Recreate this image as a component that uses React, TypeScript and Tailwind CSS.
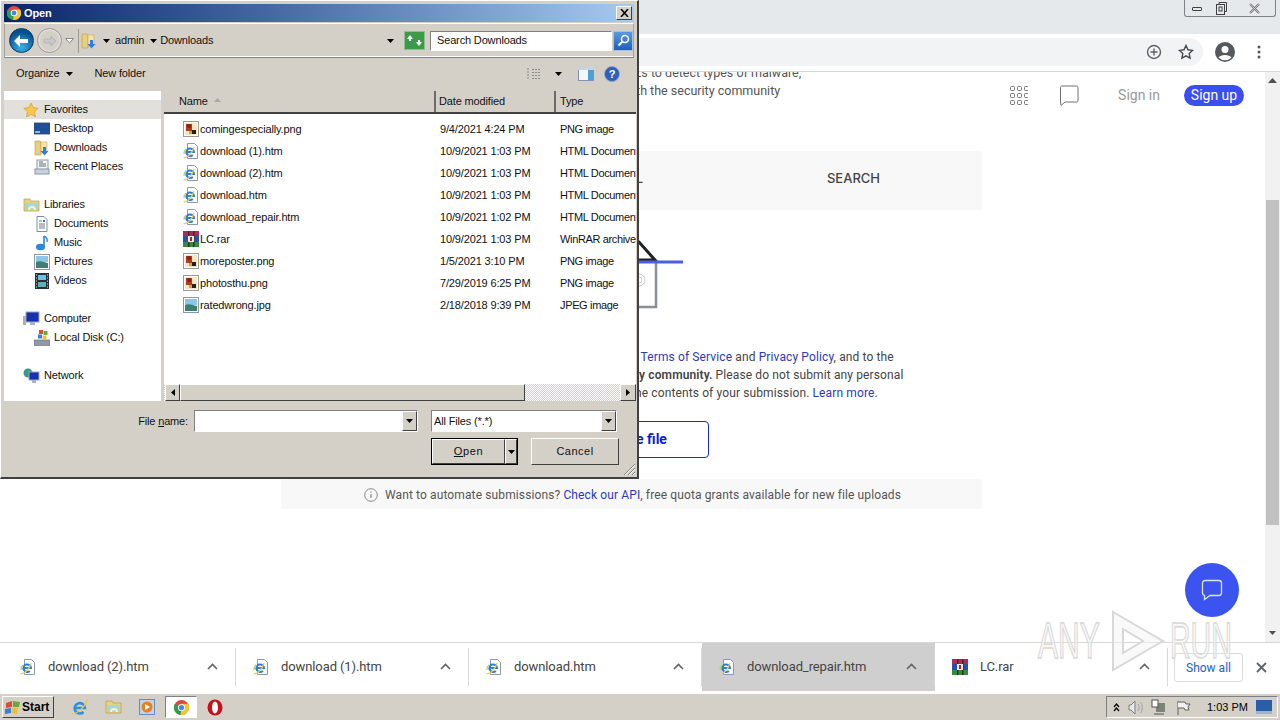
import React from "react";

const sunken = "border border-t-[#808080] border-l-[#808080] border-r-white border-b-white";
const raised = "border border-t-white border-l-white border-r-[#404040] border-b-[#404040] bg-[#d4d0c8]";

function Chrome({ s = 16 }: { s?: number }) {
  return (
    <svg width={s} height={s} viewBox="0 0 16 16">
      <circle cx="8" cy="8" r="8" fill="#e0463a" />
      <path d="M8 8 L1 4 A8 8 0 0 0 7 16 Z" fill="#2f9e4f" />
      <path d="M8 8 L7 16 A8 8 0 0 0 15 4 L8 4 Z" fill="#f6c42d" />
      <circle cx="8" cy="8" r="3.800" fill="#fff" />
      <circle cx="8" cy="8" r="2.800" fill="#4a86e8" />
    </svg>
  );
}
function Caret({ c = "#000", w = 7 }: { c?: string; w?: number }) {
  return (
    <svg width={w} height={4} viewBox="0 0 7 4">
      <path d="M0 0h7L3.500 4z" fill={c} />
    </svg>
  );
}
function IEDoc({ s = 16 }: { s?: number }) {
  return (
    <svg width={s} height={s} viewBox="0 0 16 16">
      <path d="M4.500 .5h7l3 3v12h-10z" fill="#fff" stroke="#8d99a8" />
      <path d="M3.500 9h7.500a3.800 3.800 0 1 0-1.200 3" fill="none" stroke="#2a7fd0" strokeWidth="2" />
      <path d="M.5 14.500c3 1 9-4 10.500-10.500" fill="none" stroke="#e8d050" strokeWidth="1.200" />
      <path d="M1 11c0-2 .5-4 2-5" fill="none" stroke="#b8d060" strokeWidth="1.200" />
    </svg>
  );
}
function IEGlobe() {
  return (
    <svg width="18" height="18" viewBox="0 0 18 18">
      <path d="M3 10h11a5.200 5.200 0 1 0-1.500 4" fill="none" stroke="#2f8fe0" strokeWidth="2.600" />
      <path d="M.5 15.500C4 17.500 14 10 16.500 1" fill="none" stroke="#e8c84a" strokeWidth="1.300" />
    </svg>
  );
}
function PngIcon() {
  return (
    <svg width="16" height="16" viewBox="0 0 16 16">
      <rect x=".5" y=".5" width="15" height="15" fill="#fff" stroke="#9a9a9a" />
      <rect x="2" y="2" width="12" height="12" fill="#f3e6c2" />
      <rect x="3" y="3" width="6" height="7" fill="#b33a1c" />
      <circle cx="6" cy="5" r="2" fill="#8a1f10" />
      <rect x="9" y="9" width="4" height="4" fill="#202020" />
      <rect x="6" y="10" width="3" height="3" fill="#e0a030" />
    </svg>
  );
}
function JpgIcon() {
  return (
    <svg width="16" height="16" viewBox="0 0 16 16">
      <rect x=".5" y=".5" width="15" height="15" fill="#fff" stroke="#8c98a4" />
      <rect x="2" y="2" width="12" height="6" fill="#8ec6e8" />
      <path d="M2 8c4-2 8 0 12 1v5H2z" fill="#3f7f70" />
    </svg>
  );
}
function RarIcon({ s = 16 }: { s?: number }) {
  return (
    <svg width={s} height={s} viewBox="0 0 16 16">
      <rect width="16" height="5" fill="#b0285c" />
      <rect y="5" width="16" height="6" fill="#2d4fa8" />
      <rect y="11" width="16" height="5" fill="#2f8f3f" />
      <rect x="5" width="1.500" height="16" fill="#402a20" />
      <rect x="10" width="1.500" height="16" fill="#402a20" />
      <rect x="5" y="5" width="6" height="6" fill="#f2ece0" />
      <rect x="7" y="6" width="2" height="4" fill="#b02020" />
    </svg>
  );
}
function Folder({ arrow = false }: { arrow?: boolean }) {
  return (
    <svg width={16} height={16} viewBox="0 0 16 16">
      <path d="M1 1h5l1 1v13H1z" fill="#e8cf7e" stroke="#b89a4a" strokeWidth=".6" />
      <path d="M7 2h6v10H7z" fill="#f4e4a8" stroke="#c6aa5c" strokeWidth=".6" />
      {arrow && <path d="M9 7h3v4h2.500l-4 4.500-4-4.500H9z" fill="#2f7fd6" />}
    </svg>
  );
}
function NavIcon({ k }: { k: string }) {
  switch (k) {
    case "star":
      return (
        <svg width="16" height="16" viewBox="0 0 16 16">
          <path d="M8 1l2.200 4.600 5 .7-3.600 3.500.9 5L8 12.400 3.500 14.800l.9-5L.8 6.300l5-.7z" fill="#f7c948" stroke="#d89a3a" strokeWidth=".7" />
        </svg>
      );
    case "desktop":
      return (
        <svg width="16" height="16" viewBox="0 0 16 16">
          <rect y="2" width="16" height="11" fill="#1f4f9c" stroke="#36465a" strokeWidth=".8" />
          <rect x="1" y="10" width="5" height="2" fill="#8fb4dc" />
        </svg>
      );
    case "downloads":
      return <Folder arrow />;
    case "recent":
      return (
        <svg width="16" height="16" viewBox="0 0 16 16">
          <rect x="3" y="1" width="11" height="10" fill="#f3f3f3" stroke="#8a98a8" />
          <rect x="1" y="10" width="14" height="5" fill="#c8d2dc" stroke="#8a98a8" />
          <path d="M5 3h4M5 5h7M5 7h7" stroke="#607080" />
        </svg>
      );
    case "libraries":
      return (
        <svg width="17" height="16" viewBox="0 0 17 16">
          <path d="M1 2h6l1 2h8v10H1z" fill="#e8d27e" stroke="#b79c50" strokeWidth=".7" />
          <path d="M2 6h13v7H2z" fill="#a8d6d0" />
          <path d="M6 13a3 3 0 0 1 6 0" fill="none" stroke="#f8f2d0" strokeWidth="2" />
        </svg>
      );
    case "documents":
      return (
        <svg width="16" height="16" viewBox="0 0 16 16">
          <path d="M3 .5h7l3 3v12H3z" fill="#fff" stroke="#7f8fa0" />
          <path d="M5 5h3M5 8h6M5 10h6M5 12h6" stroke="#6a7f98" />
          <rect x="9" y="4" width="2" height="2" fill="#3a70c0" />
        </svg>
      );
    case "music":
      return (
        <svg width="16" height="16" viewBox="0 0 16 16">
          <path d="M10 1v10.500" stroke="#2a76c8" strokeWidth="1.500" />
          <ellipse cx="6.500" cy="12" rx="4.500" ry="3.200" fill="#2f86d8" />
          <path d="M10 1c2 1 4 2.500 3 6" fill="none" stroke="#3a8fe0" strokeWidth="1.500" />
        </svg>
      );
    case "pictures":
      return <JpgIcon />;
    case "videos":
      return (
        <svg width="16" height="16" viewBox="0 0 16 16">
          <rect x="1" width="14" height="16" fill="#2a3038" />
          <rect x="4" y="2" width="8" height="5" fill="#6cc0e0" />
          <rect x="4" y="9" width="8" height="5" fill="#5fb0b8" />
          <path d="M2 2h1M2 5h1M2 8h1M2 11h1M2 14h1M13 2h1M13 5h1M13 8h1M13 11h1M13 14h1" stroke="#dfe6ea" />
        </svg>
      );
    case "computer":
      return (
        <svg width="17" height="16" viewBox="0 0 17 16">
          <rect x="3" y="1" width="13" height="10" fill="#1a2fb0" stroke="#9aa8b8" />
          <rect x="7" y="11" width="5" height="3" fill="#aab4c0" />
          <rect y="5" width="3" height="9" fill="#a8b4a8" />
        </svg>
      );
    case "disk":
      return (
        <svg width="16" height="16" viewBox="0 0 16 16">
          <rect y="10" width="16" height="5.500" fill="#8e9aa6" stroke="#606c78" strokeWidth=".6" />
          <rect x="5" width="4" height="4" fill="#d9502e" />
          <rect x="9.500" y="1" width="4" height="4" fill="#6aa83a" />
          <rect x="4" y="4.500" width="4" height="4" fill="#3a80d0" />
          <rect x="8.500" y="5.500" width="4" height="4" fill="#eac03a" />
        </svg>
      );
    case "network":
      return (
        <svg width="17" height="16" viewBox="0 0 17 16">
          <circle cx="5" cy="5" r="4.500" fill="#3a9a8a" />
          <rect x="6" y="4" width="10" height="8" fill="#1a2fb0" stroke="#9aa8b8" />
          <rect x="9" y="12" width="4" height="3" fill="#aab4c0" />
        </svg>
      );
  }
  return null;
}

const navGroups: { label: string; icon: string; items: [string, string][]; first?: boolean }[] = [
  { label: "Favorites", icon: "star", first: true, items: [["Desktop", "desktop"], ["Downloads", "downloads"], ["Recent Places", "recent"]] },
  { label: "Libraries", icon: "libraries", items: [["Documents", "documents"], ["Music", "music"], ["Pictures", "pictures"], ["Videos", "videos"]] },
  { label: "Computer", icon: "computer", items: [["Local Disk (C:)", "disk"]] },
  { label: "Network", icon: "network", items: [] },
];

const files: [string, string, string, string][] = [
  ["comingespecially.png", "9/4/2021 4:24 PM", "PNG image", "png"],
  ["download (1).htm", "10/9/2021 1:03 PM", "HTML Document", "ie"],
  ["download (2).htm", "10/9/2021 1:03 PM", "HTML Document", "ie"],
  ["download.htm", "10/9/2021 1:03 PM", "HTML Document", "ie"],
  ["download_repair.htm", "10/9/2021 1:02 PM", "HTML Document", "ie"],
  ["LC.rar", "10/9/2021 1:03 PM", "WinRAR archive", "rar"],
  ["moreposter.png", "1/5/2021 3:10 PM", "PNG image", "png"],
  ["photosthu.png", "7/29/2019 6:25 PM", "PNG image", "png"],
  ["ratedwrong.jpg", "2/18/2018 9:39 PM", "JPEG image", "jpg"],
];

function FileDialog() {
  return (
    <div className="absolute left-0 top-0 w-[639px] h-[479px] bg-[#d4d0c8] border-t border-l border-white border-r-2 border-b-2 border-r-[#404040] border-b-[#404040] pt-[3px] pl-[3px] pr-[1px] flex flex-col font-['Liberation_Sans',sans-serif] text-[11px] tracking-[-.15px] text-[#111] z-20">
      {/* title */}
      <div className="h-[18px] mr-[2px] shrink-0 flex items-center bg-gradient-to-r from-[#0a246a] to-[#a6caf0] pl-[3px] pr-[2px]">
        <Chrome s={14} />
        <span className="ml-[3px] text-white font-bold text-[11px] leading-none">Open</span>
        <div className={`ml-auto w-[16px] h-[14px] ${raised} flex items-center justify-center`}>
          <svg width="9" height="8" viewBox="0 0 9 8"><path d="M1 0l7 8M8 0L1 8" stroke="#000" strokeWidth="1.500" /></svg>
        </div>
      </div>
      {/* nav bar */}
      <div className="h-[35px] mt-[1px] mr-[2px] shrink-0 border border-t-white border-b-[#808080] border-x-[#a8a49c] shadow-[inset_0_-1px_0_#fff] flex items-center pl-[4px] pr-[1px]">
        <div className="w-[25px] h-[25px] shrink-0 rounded-full bg-[radial-gradient(circle_at_50%_80%,#37b4e8,#0a4f8c_70%)] border border-[#0c3a60] flex items-center justify-center">
          <svg width="15" height="12" viewBox="0 0 15 12"><path d="M6 0v4h8v4H6v4L0 6z" fill="#fff" /></svg>
        </div>
        <div className="ml-[3px] w-[25px] h-[25px] shrink-0 rounded-full bg-[#d4d0c8] border border-[#9c9c9c] shadow-[inset_0_0_3px_#fff] flex items-center justify-center">
          <svg width="13" height="10" viewBox="0 0 13 10"><path d="M8 0v3H1v4h7v3l5-5z" fill="#c8c8c8" stroke="#a8a8a8" strokeWidth=".6" /></svg>
        </div>
        <svg className="ml-[3px] shrink-0" width="9" height="6" viewBox="0 0 9 6"><path d="M.5 .5h8L4.500 5z" fill="#fff" stroke="#8a8a8a" /></svg>
        <div className="ml-[4px] w-[319px] h-[24px] shrink-0 border-l border-[#9a9a92] flex items-center pl-[2px]">
          <Folder arrow />
          <span className="ml-[6px]"><Caret /></span>
          <span className="ml-[5px]">admin</span>
          <span className="ml-[6px]"><Caret /></span>
          <span className="ml-[3px]">Downloads</span>
          <span className="ml-auto mr-[3px]"><Caret /></span>
        </div>
        <div className="ml-[7px] w-[21px] h-[19px] shrink-0 bg-[#3d9a48] border border-[#8fbf90] flex items-center justify-center">
          <svg width="15" height="11" viewBox="0 0 15 11"><path d="M0 4l3-4 3 4H4v2H2V4zM15 7l-3 4-3-4h2V5h2v2z" fill="#fff" /></svg>
        </div>
        <div className={`ml-[5px] w-[182px] h-[20px] shrink-0 bg-white ${sunken} border-t-[#404040] border-l-[#404040] flex items-center pl-[6px]`}>Search Downloads</div>
        <div className="ml-[1px] w-[20px] h-[20px] shrink-0 bg-gradient-to-b from-[#5a9ae0] to-[#1f5fb8] border border-[#a8c0d8] flex items-center justify-center">
          <svg width="13" height="13" viewBox="0 0 13 13"><circle cx="8" cy="5" r="3.500" fill="none" stroke="#fff" strokeWidth="1.500" /><path d="M5.500 7.500L1.500 11.500" stroke="#fff" strokeWidth="2" /></svg>
        </div>
      </div>
      {/* toolbar */}
      <div className="h-[33px] pb-[2px] shrink-0 flex items-center pl-[12px]">
        <span>Organize</span>
        <span className="ml-[7px]"><Caret /></span>
        <span className="ml-[21px]">New folder</span>
        <div className="ml-auto flex items-center pr-[16px]">
          <svg width="15" height="12" viewBox="0 0 15 12"><path d="M1 1h3M1 4h3M1 7h3M1 10h3M6 1.500h8M6 4.500h8M6 7.500h8M6 10.500h8" stroke="#8a8a8a" strokeDasharray="2 1" /></svg>
          <span className="ml-[14px]"><Caret /></span>
          <svg className="ml-[16px]" width="16" height="14" viewBox="0 0 16 14"><rect x=".5" y=".5" width="15" height="13" fill="#f4f8fc" stroke="#7d95b0" /><rect x="10" y="3" width="5" height="10" fill="#4d9fd8" /><rect y="0" width="16" height="3" fill="#c4d4e4" /></svg>
          <svg className="ml-[10px]" width="16" height="16" viewBox="0 0 16 16"><circle cx="8" cy="8" r="7.500" fill="#2f5fb8" stroke="#8aa4c8" /><text x="8" y="12" textAnchor="middle" fontSize="11" fontWeight="700" fill="#fff" fontFamily="Liberation Sans">?</text></svg>
        </div>
      </div>
      {/* panes */}
      <div className="h-[310px] shrink-0 flex">
        <div className="w-[157px] shrink-0 bg-white pt-[9px] overflow-hidden">
          {navGroups.map((g) => (
            <div key={g.label} className="mb-[19px]">
              <div className={`h-[19px] flex items-center pl-[19px] ${g.first ? "bg-[#e2e0db]" : ""}`}>
                <span className="w-[21px] flex"><NavIcon k={g.icon} /></span>
                <span>{g.label}</span>
              </div>
              {g.items.map(([n, i]) => (
                <div key={n} className="h-[19px] flex items-center pl-[30px]">
                  <span className="w-[20px] flex"><NavIcon k={i} /></span>
                  <span>{n}</span>
                </div>
              ))}
            </div>
          ))}
        </div>
        <div className="w-[3px] shrink-0 bg-[#d4d0c8]" />
        <div className="w-[472px] shrink-0 flex flex-col bg-white">
          <div className="h-[23px] shrink-0 flex bg-[#d4d0c8] border-b-2 border-[#404040]">
            <div className="w-[272px] shrink-0 pl-[15px] flex items-center border-r-2 border-[#6c6c6c] relative">
              Name
              <svg className="ml-[6px] mb-[3px]" width="7" height="4" viewBox="0 0 7 4"><path d="M0 4h7L3.500 0z" fill="#a8a8a8" /></svg>
            </div>
            <div className="w-[120px] shrink-0 pl-[3px] flex items-center border-r-2 border-[#6c6c6c]">Date modified</div>
            <div className="flex-1 pl-[4px] flex items-center">Type</div>
          </div>
          <div className="flex-1 pt-[4px] overflow-hidden">
            {files.map(([n, d, t, k]) => (
              <div key={n} className="h-[22px] flex items-center whitespace-nowrap">
                <span className="ml-[19px] w-[17px] shrink-0 flex">
                  {k === "png" && <PngIcon />}
                  {k === "ie" && <IEDoc />}
                  {k === "rar" && <RarIcon />}
                  {k === "jpg" && <JpgIcon />}
                </span>
                <span className="w-[240px] shrink-0">{n}</span>
                <span className="w-[120px] shrink-0">{d}</span>
                <span className="shrink-0 tracking-[-.35px]">{t}</span>
              </div>
            ))}
          </div>
          <div className="h-[17px] shrink-0 flex bg-[repeating-conic-gradient(#d4d0c8_0_25%,#fff_0_50%)] bg-[length:2px_2px] pl-[1px]">
            <div className={`w-[15px] shrink-0 ${raised} flex items-center justify-center`}>
              <svg width="4" height="7" viewBox="0 0 4 7"><path d="M4 0v7L0 3.500z" fill="#000" /></svg>
            </div>
            <div className={`w-[345px] shrink-0 ${raised}`} />
            <div className={`w-[16px] ml-auto ${raised} flex items-center justify-center`}>
              <svg width="4" height="7" viewBox="0 0 4 7"><path d="M0 0v7l4-3.500z" fill="#000" /></svg>
            </div>
          </div>
        </div>
      </div>
      {/* footer */}
      <div className="flex-1 relative">
        <div className="flex items-center mt-[9px] h-[22px]">
          <span className="w-[184px] shrink-0 text-right">File <span className="underline">n</span>ame:</span>
          <div className={`ml-[6px] w-[224px] h-[22px] shrink-0 bg-white ${sunken} border-t-[#404040] border-l-[#404040] flex justify-end`}>
            <div className={`w-[15px] ${raised} flex items-center justify-center`}><Caret /></div>
          </div>
          <div className={`ml-[13px] w-[186px] h-[22px] shrink-0 bg-white ${sunken} border-t-[#404040] border-l-[#404040] flex items-center pl-[2px]`}>
            <span>All Files (*.*)</span>
            <div className={`ml-auto w-[15px] h-full ${raised} flex items-center justify-center`}><Caret /></div>
          </div>
        </div>
        <div className="flex mt-[6px] pl-[427px]">
          <div className="w-[87px] h-[27px] shrink-0 border border-black flex bg-[#d4d0c8]">
            <div className={`w-[73px] ${raised} flex items-center justify-center tracking-[.6px]`}><span><span className="underline">O</span>pen</span></div>
            <div className={`flex-1 ${raised} flex items-center justify-center`}><Caret /></div>
          </div>
          <div className={`ml-[13px] w-[88px] h-[27px] shrink-0 ${raised} flex items-center justify-center tracking-[.5px]`}>Cancel</div>
        </div>
        <svg className="absolute right-[0px] bottom-[1px]" width="13" height="13" viewBox="0 0 13 13"><path d="M1 12L12 1M5 12l7-7M9 12l3-3" stroke="#808080" /><path d="M2 12L12 2M6 12l6-6M10 12l2-2" stroke="#fff" /></svg>
      </div>
    </div>
  );
}

function BrowserChrome() {
  return (
    <>
      <div className="h-[34px] shrink-0 bg-[#e6e9ec] flex justify-end pr-[4px]">
        <div className="w-[92px] h-[17px] border border-t-0 border-[#7c8288] rounded-b-[3px] flex items-center text-[#404040]">
          <div className="w-[24px] flex justify-center"><div className="w-[10px] h-[4px] border border-[#404040] rounded-[1px] mt-[2px]" /></div>
          <div className="w-[24px] flex justify-center">
            <svg width="11" height="13" viewBox="0 0 11 13"><rect x=".5" y="2.500" width="8" height="10" fill="none" stroke="#404040" /><path d="M3 2.500V.5h7.500v9H8.500" fill="none" stroke="#404040" /><rect x="3" y="5" width="3" height="4" fill="none" stroke="#404040" /></svg>
          </div>
          <div className="flex-1 flex justify-center">
            <svg width="11" height="11" viewBox="0 0 11 11"><path d="M1 1l9 9M10 1l-9 9" stroke="#707070" strokeWidth="2" /><path d="M1 1l9 9M10 1l-9 9" stroke="#e6e9ec" strokeWidth=".7" /></svg>
          </div>
        </div>
      </div>
      <div className="h-[38px] shrink-0 bg-white border-b border-[#d5d6d8] flex items-start pt-[4px]">
        <div className="w-[1183px] ml-[20px] h-[28px] rounded-r-full bg-[#f1f3f4] flex items-center justify-end pr-[9px] text-[#5f6368] shrink-0">
          <svg width="16" height="16" viewBox="0 0 16 16" className="mr-[16px]"><circle cx="8" cy="8" r="6.500" fill="none" stroke="#5f6368" strokeWidth="1.400" /><path d="M8 4.500v7M4.500 8h7" stroke="#5f6368" strokeWidth="1.400" /></svg>
          <svg width="16" height="16" viewBox="0 0 16 16"><path d="M8 1.500l2 4.300 4.600.6-3.400 3.200.9 4.600L8 11.900l-4.100 2.300.9-4.600L1.400 6.400 6 5.800z" fill="none" stroke="#45494d" strokeWidth="1.400" /></svg>
        </div>
        <svg width="20" height="20" viewBox="0 0 20 20" className="ml-[12px] mt-[4px] shrink-0"><circle cx="10" cy="10" r="10" fill="#55595e" /><circle cx="10" cy="7.500" r="3.500" fill="#fff" /><path d="M3.500 15.500c2-3.500 11-3.500 13 0A9 9 0 0 1 3.500 15.500z" fill="#fff" /></svg>
        <svg width="4" height="14" viewBox="0 0 4 14" className="ml-[22px] mt-[7px] shrink-0"><circle cx="2" cy="2" r="1.500" fill="#55595e" /><circle cx="2" cy="7" r="1.500" fill="#55595e" /><circle cx="2" cy="12" r="1.500" fill="#55595e" /></svg>
      </div>
    </>
  );
}

function Page() {
  return (
    <div className="h-[570px] shrink-0 flex overflow-hidden font-['Roboto',sans-serif]">
      <div className="flex-1 relative overflow-hidden">
        <div className="flex pr-[21px] h-[87px] -mt-[8px]">
          <div className="ml-[430px] w-[400px] text-center text-[12.500px] leading-[18px] text-[#555] whitespace-nowrap">
            Analyse suspicious files and URLs to detect types of malware,<br />
            automatically share them with the security community
          </div>
          <div className="ml-auto flex items-center h-[62px]">
            <svg width="18" height="21" viewBox="0 0 18 21" className="mr-[31px]">
              {[0, 7, 14].map((y) => [0, 7, 14].map((x) => <rect key={`${x}-${y}`} x={x + 0.5} y={y + 1.500} width="4" height="4" rx="1" fill="none" stroke="#707070" />))}
            </svg>
            <svg width="20" height="21" viewBox="0 0 20 21" className="mr-[39px]"><path d="M2.500 1h15A1.500 1.500 0 0 1 19 2.500v13a1.500 1.500 0 0 1-1.500 1.500H6l-4 3.500-.5-3.500V2.500A1.500 1.500 0 0 1 2.500 1z" fill="none" stroke="#707070" /></svg>
            <span className="text-[14px] text-[#999] mr-[24px]">Sign in</span>
            <span className="w-[60px] h-[21px] rounded-full bg-[#3b4ff0] text-white text-[14px] flex items-center justify-center">Sign up</span>
          </div>
        </div>
        <div className="ml-[281px] w-[701px]">
          <div className="h-[59px] pb-[4px] bg-[#f8f8f8] grid grid-cols-3 pl-[15px] pr-[17px] items-center text-center text-[13px] font-medium text-[#444] font-['Inter',sans-serif]">
            <span>FILE</span>
            <span>URL</span>
            <span>SEARCH</span>
          </div>
          <div className="h-[269px] flex flex-col items-center pt-[30px]">
            <svg width="110" height="70" viewBox="0 0 110 70" className="shrink-0">
              <path d="M33 22v45h46V22" fill="none" stroke="#8a8e96" strokeWidth="2.500" />
              <path d="M33 2h29l16 18H33z" fill="#fff" stroke="#222" strokeWidth="3" />
              <path d="M0 22h106" stroke="#4a5ee8" strokeWidth="3" />
              <circle cx="62" cy="40" r="6" fill="none" stroke="#c8c8c8" />
              <circle cx="62" cy="40" r="3" fill="none" stroke="#c8c8c8" />
            </svg>
            <p className="mt-[38px] text-[12px] leading-[18px] text-center text-[#444] whitespace-nowrap tracking-[.12px]">
              By submitting data above, you are agreeing to our <span className="text-[#2b3bb8]">Terms of Service</span> and <span className="text-[#2b3bb8]">Privacy Policy</span>, and to the<br />
              sharing of your Sample submission <span className="font-semibold">with the security community.</span> Please do not submit any personal<br />
              information; VirusTotal is not responsible for the contents of your submission. <span className="text-[#2b3bb8]">Learn more.</span>
            </p>
            <div className="mt-[19px] w-[154px] h-[37px] shrink-0 rounded-[4px] border border-[#1a2ad0] text-[#0b1fc8] font-bold text-[14px] flex items-center justify-center">Choose file</div>
          </div>
          <div className="h-[30px] pt-[1px] pl-[2px] bg-[#f8f8f8] flex items-center justify-center text-[12px] text-[#555] tracking-[.12px]">
            <svg width="14" height="14" viewBox="0 0 14 14" className="mr-[7px]"><circle cx="7" cy="7" r="6.300" fill="none" stroke="#888" /><path d="M7 6v4M7 3.500v1.300" stroke="#888" strokeWidth="1.200" /></svg>
            <span>Want to automate submissions? <span className="text-[#2b3bb8]">Check our API</span>, free quota grants available for new file uploads</span>
          </div>
        </div>
        <div className="absolute left-[1185px] top-[491px] w-[54px] h-[54px] rounded-full bg-[#3b54f0] flex items-center justify-center">
          <svg width="22" height="22" viewBox="0 0 22 22"><path d="M4 1.500h14A2.500 2.500 0 0 1 20.500 4v10a2.500 2.500 0 0 1-2.500 2.500H9L3.500 20.500V16.500A2.500 2.500 0 0 1 1.500 14V4A2.500 2.500 0 0 1 4 1.500z" fill="none" stroke="#dfe4ff" strokeWidth="1.300" /></svg>
        </div>
      </div>
      <div className="w-[15px] bg-[#f1f1f1] flex flex-col items-center relative">
        <div className="mt-[6px]"><svg width="9" height="5" viewBox="0 0 9 5"><path d="M0 5h9L4.500 0z" fill="#505050" /></svg></div>
        <div className="mt-[117px] w-[13px] h-[325px] bg-[#c1c1c1]" />
        <div className="mt-auto mb-[7px]"><Caret c="#505050" w={9} /></div>
      </div>
    </div>
  );
}

function DlItem({ name, icon, active, first }: { name: string; icon: React.ReactNode; active?: boolean; first?: boolean }) {
  return (
    <div className={`shrink-0 h-full flex items-center relative ${first ? "w-[236px]" : "w-[233px]"} ${active ? "bg-[#cfcfcf]" : ""}`}>
      <span className={`${first ? "ml-[20px]" : "ml-[17px]"} w-[28px] flex`}>{icon}</span>
      <span className="text-[13px] text-[#444] tracking-[-.1px]">{name}</span>
      <svg className={`absolute top-[20px] ${first ? "left-[207px]" : "left-[204px]"}`} width="11" height="7" viewBox="0 0 11 7"><path d="M1 6l4.500-4.500L10 6" fill="none" stroke="#5f6368" strokeWidth="1.600" /></svg>
      <div className="absolute right-0 top-[5px] bottom-[5px] w-px bg-[#d8d8d8]" />
    </div>
  );
}

function DownloadBar() {
  return (
    <div className="h-[51px] shrink-0 bg-white border-t border-[#d8d8d8] border-b-2 border-b-white flex items-stretch font-['Roboto',sans-serif] relative">
      <DlItem name="download (2).htm" icon={<IEDoc />} first />
      <DlItem name="download (1).htm" icon={<IEDoc />} />
      <DlItem name="download.htm" icon={<IEDoc />} />
      <DlItem name="download_repair.htm" icon={<IEDoc />} active />
      <DlItem name="LC.rar" icon={<RarIcon />} />
      <div className="ml-[6px] mt-[10px] w-[69px] h-[29px] rounded-[3px] border border-[#dadce0] text-[12px] text-[#1a62c8] flex items-center justify-center shrink-0">Show all</div>
      <svg className="ml-[13px] mt-[19px]" width="11" height="11" viewBox="0 0 11 11"><path d="M1 1l9 9M10 1l-9 9" stroke="#5f6368" strokeWidth="1.800" /></svg>
    </div>
  );
}

function Taskbar() {
  return (
    <div className="flex-1 bg-[#d4d0c8] border-t border-white flex items-center pl-[2px] pr-[2px] font-['Liberation_Sans',sans-serif] text-[11px] text-black">
      <div className={`w-[52px] h-[22px] shrink-0 ${raised} flex items-center pl-[2px] font-bold text-[12px]`}>
        <svg width="16" height="15" viewBox="0 0 16 15" className="mr-[1px]"><path d="M1 3l6-2v6l-6 1z" fill="#d9502e" /><path d="M8 1l7 1-1 5-6 0z" fill="#6aa83a" /><path d="M0 9l6-1v5l-6 1z" fill="#3a80d0" /><path d="M7 8h6l-1 6-5-1z" fill="#eac03a" /></svg>
        Start
      </div>
      <span className="ml-[17px] flex"><IEGlobe /></span>
      <span className="ml-[16px] flex"><NavIcon k="libraries" /></span>
      <svg className="ml-[17px]" width="16" height="16" viewBox="0 0 16 16"><rect x=".5" y=".5" width="15" height="15" fill="#bcd4ec" stroke="#5f8fc0" /><circle cx="8" cy="8" r="5.500" fill="#e8801e" /><path d="M6 5l5 3-5 3z" fill="#fff" /></svg>
      <div className={`ml-[10px] w-[32px] h-[22px] bg-white ${sunken} border-t-[#404040] border-l-[#404040] flex items-center justify-center`}><Chrome s={15} /></div>
      <svg className="ml-[10px]" width="16" height="17" viewBox="0 0 16 17"><ellipse cx="8" cy="8.500" rx="7.500" ry="8" fill="#c8101c" /><ellipse cx="8" cy="8.500" rx="3" ry="6" fill="#fff" /></svg>
      <div className={`ml-auto w-[172px] h-[22px] ${sunken} flex items-center`}>
        <svg className="ml-[6px]" width="7" height="9" viewBox="0 0 7 9"><path d="M1 4l2.500-3L6 4M1 8l2.500-3L6 8" fill="none" stroke="#000" strokeWidth="1.200" /></svg>
        <svg className="ml-[8px]" width="16" height="15" viewBox="0 0 16 15"><path d="M1 5h2l4-4v13l-4-4H1z" fill="#e8e8e8" stroke="#808080" /><path d="M10 4c1.500 2 1.500 5 0 7M12.500 2c2.500 3 2.500 8 0 11" fill="none" stroke="#a0a0a0" /></svg>
        <svg className="ml-[7px]" width="15" height="16" viewBox="0 0 15 16"><rect x="5" y="4" width="9" height="9" fill="#7a8478" /><rect x="1" y="1" width="6" height="7" fill="#fff" stroke="#505050" /><path d="M3 15h10" stroke="#505050" /></svg>
        <svg className="ml-[10px]" width="15" height="15" viewBox="0 0 15 15"><path d="M2 1v14" stroke="#606060" /><path d="M2 2h7l1 2h4l-2 3 1 3H9L8 8H2" fill="#f0f0f0" stroke="#606060" /></svg>
        <span className="ml-[16px] w-[40px] shrink-0 whitespace-nowrap">1:03 PM</span>
        <svg className="ml-[9px]" width="16" height="15" viewBox="0 0 16 15"><rect width="16" height="12" fill="#2a5fa8" /><rect y="11" width="16" height="3" fill="#9cb4cc" /></svg>
      </div>
    </div>
  );
}

export default function App() {
  return (
    <div className="relative w-[1280px] h-[720px] overflow-hidden bg-white flex flex-col">
      <BrowserChrome />
      <Page />
      <DownloadBar />
      <Taskbar />
      <FileDialog />
      <div className="absolute left-[1038px] top-[610px] h-[62px] flex items-center font-['Liberation_Sans',sans-serif] text-[50px] leading-none text-[#f4f4f4]/60 [-webkit-text-stroke:1.500px_#d8d8d8] z-10 pointer-events-none">
        <span className="scale-x-[.6] origin-left w-[72px] inline-block">ANY</span>
        <svg width="55" height="62" viewBox="0 0 55 62"><path d="M3 2l50 29L3 60zM13 19v24l20-12z" fill="#f4f4f4" fillOpacity=".5" stroke="#d8d8d8" strokeWidth="2" /></svg>
        <span className="scale-x-[.57] origin-left w-[67px] inline-block ml-[5px]">RUN</span>
      </div>
    </div>
  );
}
